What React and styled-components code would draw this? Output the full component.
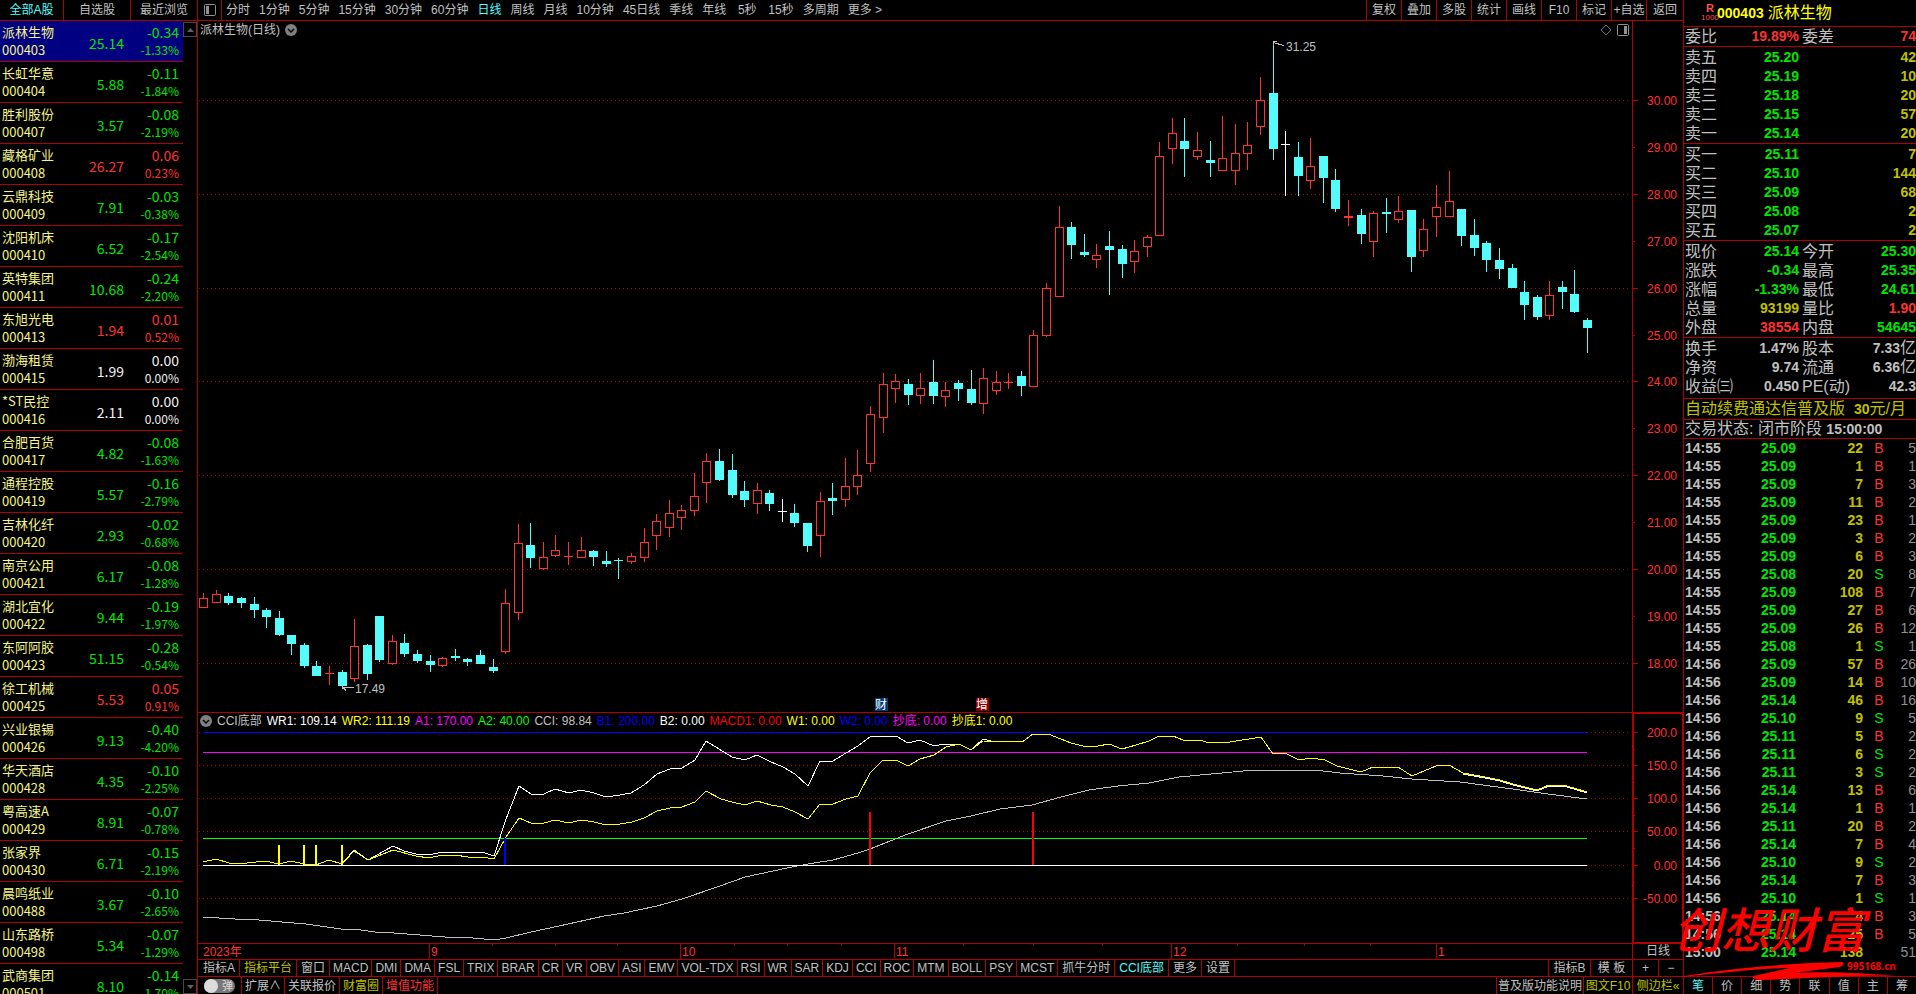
import React from 'react'
import styled, { createGlobalStyle } from 'styled-components'

const red = '#ff3232'
const green = '#00e600'
const line = '#b00000'
const cyan = '#54fcfc'
const grey = '#c0c0c0'
const olive = '#c0c000'

const GlobalStyle = createGlobalStyle`
* { box-sizing: border-box; }
body {
  margin: 0;
  background: #000;
  overflow: hidden;
}
button {
  margin: 0;
  padding: 0;
  border: 0;
  background: none;
  color: inherit;
  font: inherit;
  cursor: pointer;
}
`
const Page = styled.div`
display: flex;
height: 100vh;
overflow: hidden;
background: #000;
color: ${grey};
font-family: "Liberation Sans", "Noto Sans CJK SC", sans-serif;
font-size: 12px;
line-height: 16px;
white-space: nowrap;
`

/* stock list */
const StockPanel = styled.aside`
display: flex;
flex-direction: column;
width: 198px;
flex-shrink: 0;
border-right: 1px solid ${line};
`
const StockTabs = styled.nav`
display: grid;
grid-template-columns: 64px 67px 1fr;
height: 21px;
flex-shrink: 0;
border-bottom: 1px solid ${line};
`
const StockTab = styled.button`
border-right: ${p => p.$last ? 0 : 1}px solid ${line};
color: ${p => p.$active ? cyan : grey};
`
const StockBody = styled.div`
display: flex;
flex: 1;
min-height: 0;
`
const StockList = styled.ul`
flex: 1;
margin: 0;
padding: 0;
list-style: none;
overflow: hidden;
font-family: "Noto Sans CJK SC", sans-serif;
`
const StockRow = styled.li`
display: grid;
grid-template-columns: 1fr 55px 55px;
height: 41px;
padding: 2px 4px 0 2px;
border-bottom: 1px solid ${line};
background: ${p => p.$active ? '#000080' : '#000'};
color: ${p => p.$color};
`
const StockName = styled.div`
display: grid;
grid-template-rows: 18px 18px;
line-height: 18px;
font-size: 13px;
color: #f4f488;
`
const StockPrice = styled.div`
font-size: 14px;
line-height: 40px;
text-align: right;
`
const StockChange = styled.div`
display: grid;
grid-template-rows: 18px 18px;
line-height: 18px;
font-size: 14px;
text-align: right;
`
const Percent = styled.span`
font-size: 12px;
`
const ScrollTrack = styled.div`
display: flex;
flex-direction: column;
justify-content: space-between;
width: 14px;
padding-top: 1px;
`
const ScrollButton = styled.button`
display: grid;
place-items: center;
height: 15px;
border: 1px solid #484848;
`

/* centre */
const Centre = styled.main`
display: flex;
flex-direction: column;
flex: 1;
min-width: 0;
`
const Toolbar = styled.nav`
display: flex;
height: 21px;
flex-shrink: 0;
border-bottom: 1px solid ${line};
`
const LayoutButton = styled.button`
display: grid;
place-items: center;
width: 24px;
border-right: 1px solid ${line};
`
const Periods = styled.div`
display: flex;
flex: 1;
gap: 1px;
`
const Period = styled.button`
min-width: 32px;
padding: 0 4px;
color: ${p => p.$active ? cyan : grey};
`
const Tool = styled.button`
width: 35px;
border-left: 1px solid ${line};
&:last-child { width: 37px; }
`
const Pane = styled.section`
display: grid;
grid-template: 100% / 100%;
flex: ${p => p.$height ? `0 0 ${p.$height}px` : '1 1 0'};
min-height: 0;
border-bottom: 1px solid ${line};
`
const Chart = styled.svg`
grid-area: 1 / 1;
display: block;
width: 100%;
height: 100%;
font-family: "Liberation Sans", "Noto Sans CJK SC", sans-serif;
font-size: 12px;
`
const PaneHead = styled.header`
grid-area: 1 / 1;
align-self: start;
display: flex;
align-items: center;
gap: 5px;
height: ${p => p.$height}px;
padding: 0 54px 0 2px;
`
const Spacer = styled.span`
flex: 1;
`
const Reading = styled.span`
color: ${p => p.$color};
`
const TimeRow = styled.div`
display: flex;
height: 16px;
flex-shrink: 0;
border-bottom: 1px solid ${line};
`
const TimeChart = styled(Chart)`
flex: 1;
width: auto;
min-width: 0;
`
const TimeUnit = styled.div`
width: 51px;
border-left: 1px solid ${line};
line-height: 15px;
text-align: center;
`
const TabRow = styled.nav`
display: flex;
height: 17px;
flex-shrink: 0;
padding-left: ${p => p.$last ? 0 : 1}px;
border-bottom: ${p => p.$last ? 0 : 1}px solid ${line};
`
const Tab = styled.button`
padding: 0 ${p => p.$cjk ? 4 : 3}px;
border-right: 1px solid ${line};
color: ${p => p.$color || grey};
`
const EndTab = styled.button`
width: ${p => p.$width}px;
border-left: 1px solid ${line};
color: ${p => p.$color || grey};
`
const Toggle = styled.label`
display: flex;
align-items: center;
width: 44px;
padding-left: 6px;
border-right: 1px solid ${line};
input {
  position: absolute;
  opacity: 0;
}
`
const ToggleTrack = styled.span`
display: flex;
align-items: center;
gap: 4px;
width: 31px;
height: 14px;
border-radius: 7px;
background: #787878;
color: #ddd;
font-size: 11px;
line-height: 14px;
&::before {
  content: "";
  width: 14px;
  height: 14px;
  border-radius: 7px;
  background: #dcdcdc;
}
`

/* quote panel */
const QuotePanel = styled.aside`
position: relative;
display: flex;
flex-direction: column;
width: 233px;
flex-shrink: 0;
border-left: 1px solid ${line};
font-size: 16px;
`
const QuoteTitle = styled.header`
display: flex;
align-items: center;
gap: 4px;
height: 27px;
padding-left: 17px;
border-bottom: 1px solid ${line};
color: #ffff00;
`
const Margin = styled.span`
display: grid;
justify-items: center;
width: 16px;
font-size: 8px;
line-height: 9px;
color: #ff5050;
b { font-size: 11px; }
`
const Code = styled.b`
margin-left: -4px;
font-size: 14px;
`
const QuoteTable = styled.table`
width: 100%;
table-layout: fixed;
border-spacing: 0;
border-bottom: 1px solid ${line};
padding: ${p => p.$pad};
`
const QuoteLabel = styled.th`
height: 19px;
padding: 0 0 0 ${p => p.$second ? 3 : 1}px;
width: ${p => p.$second ? 49 : 50}px;
font-weight: 400;
line-height: 19px;
text-align: left;
`
const QuoteValue = styled.td`
padding: 0;
width: ${p => p.$first ? '65px' : 'auto'};
color: ${p => p.$color};
font-size: 14px;
font-weight: 700;
line-height: 19px;
text-align: right;
span {
  font-size: 16px;
  font-weight: 400;
  line-height: 0;
}
`
const Notice = styled.div`
height: ${p => p.$height}px;
padding-left: 1px;
border-bottom: 1px solid ${line};
line-height: ${p => p.$height - 1}px;
color: ${p => p.$color};
white-space: pre;
b { font-size: 14px; }
`
const TradeArea = styled.div`
flex: 1;
min-height: 0;
overflow: hidden;
`
const Trades = styled.table`
width: 100%;
table-layout: fixed;
border-spacing: 0;
font-size: 14px;
font-weight: 700;
line-height: 18px;
`
const Trade = styled.td`
width: ${p => p.$width ? `${p.$width}px` : 'auto'};
height: 18px;
padding: 0 0 0 ${p => p.$left ? 1 : 0}px;
color: ${p => p.$color};
font-weight: ${p => p.$light ? 400 : 700};
text-align: ${p => p.$left ? 'left' : p.$mid ? 'center' : 'right'};
`
const QuoteTabs = styled.nav`
display: grid;
grid-template-columns: 28px repeat(7, 1fr);
height: 18px;
border-top: 1px solid ${line};
font-size: 12px;
`
const QuoteTab = styled.button`
border-left: ${p => p.$active ? 0 : 1}px solid ${line};
color: ${p => p.$active ? cyan : grey};
`
const Brand = styled.svg`
position: absolute;
right: 0;
bottom: 0;
width: 248px;
height: 100px;
pointer-events: none;
`

const stocks = [
    ['派林生物', '000403', '25.14', '-0.34', '-1.33%'],
    ['长虹华意', '000404', '5.88', '-0.11', '-1.84%'],
    ['胜利股份', '000407', '3.57', '-0.08', '-2.19%'],
    ['藏格矿业', '000408', '26.27', '0.06', '0.23%'],
    ['云鼎科技', '000409', '7.91', '-0.03', '-0.38%'],
    ['沈阳机床', '000410', '6.52', '-0.17', '-2.54%'],
    ['英特集团', '000411', '10.68', '-0.24', '-2.20%'],
    ['东旭光电', '000413', '1.94', '0.01', '0.52%'],
    ['渤海租赁', '000415', '1.99', '0.00', '0.00%'],
    ['*ST民控', '000416', '2.11', '0.00', '0.00%'],
    ['合肥百货', '000417', '4.82', '-0.08', '-1.63%'],
    ['通程控股', '000419', '5.57', '-0.16', '-2.79%'],
    ['吉林化纤', '000420', '2.93', '-0.02', '-0.68%'],
    ['南京公用', '000421', '6.17', '-0.08', '-1.28%'],
    ['湖北宜化', '000422', '9.44', '-0.19', '-1.97%'],
    ['东阿阿胶', '000423', '51.15', '-0.28', '-0.54%'],
    ['徐工机械', '000425', '5.53', '0.05', '0.91%'],
    ['兴业银锡', '000426', '9.13', '-0.40', '-4.20%'],
    ['华天酒店', '000428', '4.35', '-0.10', '-2.25%'],
    ['粤高速A', '000429', '8.91', '-0.07', '-0.78%'],
    ['张家界', '000430', '6.71', '-0.15', '-2.19%'],
    ['晨鸣纸业', '000488', '3.67', '-0.10', '-2.65%'],
    ['山东路桥', '000498', '5.34', '-0.07', '-1.29%'],
    ['武商集团', '000501', '8.10', '-0.14', '-1.70%'],
]

const periods = ['分时', '1分钟', '5分钟', '15分钟', '30分钟', '60分钟', '日线', '周线', '月线', '10分钟', '45日线', '季线', '年线', '5秒', '15秒', '多周期', '更多 >']
const tools = ['复权', '叠加', '多股', '统计', '画线', 'F10', '标记', '+自选', '返回']

// high, body top, body bottom, low, kind (r up, c down, w flat)
const candles = [
    [593, 598, 608, 608, 'r'], [590, 594, 603, 603, 'r'], [593, 596, 603, 605, 'c'], [597, 598, 603, 608, 'c'],
    [597, 604, 610, 618, 'c'], [608, 610, 617, 628, 'c'], [611, 618, 635, 636, 'c'], [635, 635, 644, 655, 'c'],
    [643, 645, 666, 668, 'c'], [661, 666, 676, 676, 'c'], [666, 673, 674, 685, 'r'], [670, 672, 686, 686, 'c'],
    [619, 646, 679, 682, 'r'], [644, 645, 674, 680, 'c'], [616, 616, 660, 662, 'c'], [635, 641, 664, 665, 'r'],
    [634, 643, 654, 657, 'c'], [650, 654, 661, 663, 'c'], [655, 661, 665, 672, 'c'], [657, 658, 666, 667, 'r'],
    [649, 656, 658, 661, 'c'], [658, 659, 662, 666, 'c'], [650, 655, 664, 664, 'c'], [659, 667, 671, 673, 'c'],
    [589, 603, 652, 654, 'r'], [524, 543, 613, 620, 'r'], [523, 545, 558, 568, 'c'], [542, 557, 569, 570, 'r'],
    [535, 550, 556, 557, 'r'], [542, 556, 557, 565, 'r'], [537, 550, 558, 558, 'r'], [550, 551, 557, 566, 'c'],
    [551, 561, 564, 567, 'c'], [558, 560, 561, 579, 'c'], [553, 556, 562, 564, 'r'], [528, 542, 558, 562, 'r'],
    [514, 521, 536, 550, 'r'], [500, 513, 528, 537, 'r'], [505, 510, 518, 530, 'r'], [473, 496, 511, 516, 'r'],
    [453, 461, 483, 503, 'r'], [449, 461, 480, 481, 'c'], [454, 470, 495, 498, 'c'], [481, 491, 500, 507, 'c'],
    [483, 490, 504, 514, 'r'], [490, 493, 504, 511, 'c'], [499, 511, 512, 522, 'w'], [504, 513, 523, 527, 'c'],
    [523, 523, 546, 552, 'c'], [492, 501, 536, 557, 'r'], [483, 498, 501, 515, 'c'], [458, 486, 500, 507, 'r'],
    [450, 475, 487, 495, 'r'], [406, 414, 464, 472, 'r'], [373, 384, 418, 433, 'r'], [374, 381, 389, 403, 'r'],
    [379, 384, 395, 405, 'c'], [373, 388, 396, 404, 'r'], [360, 382, 396, 404, 'c'], [382, 390, 397, 407, 'r'],
    [380, 383, 389, 401, 'c'], [370, 389, 403, 405, 'c'], [368, 378, 404, 414, 'r'], [371, 382, 391, 395, 'r'],
    [373, 382, 383, 389, 'r'], [371, 376, 386, 396, 'c'], [330, 335, 387, 387, 'r'], [283, 288, 336, 337, 'r'],
    [206, 227, 297, 297, 'r'], [222, 227, 245, 259, 'c'], [234, 252, 255, 257, 'c'], [244, 255, 260, 268, 'r'],
    [231, 246, 250, 295, 'c'], [245, 249, 264, 278, 'c'], [240, 251, 262, 273, 'r'], [235, 237, 247, 257, 'r'],
    [142, 156, 236, 236, 'r'], [118, 133, 149, 164, 'r'], [118, 141, 149, 177, 'c'], [132, 150, 157, 160, 'r'],
    [141, 160, 163, 177, 'c'], [116, 158, 171, 171, 'r'], [124, 153, 171, 185, 'r'], [122, 145, 154, 170, 'r'],
    [77, 100, 127, 135, 'r'], [41, 93, 149, 160, 'c'], [131, 144, 145, 196, 'w'], [142, 157, 176, 196, 'c'],
    [138, 166, 181, 189, 'r'], [156, 156, 178, 203, 'c'], [169, 180, 209, 212, 'c'], [200, 216, 218, 226, 'r'],
    [209, 215, 234, 244, 'c'], [211, 213, 242, 257, 'r'], [198, 212, 214, 233, 'c'], [196, 211, 220, 223, 'r'],
    [210, 210, 257, 272, 'c'], [219, 229, 251, 257, 'r'], [185, 207, 217, 237, 'r'], [171, 201, 217, 217, 'r'],
    [209, 209, 236, 246, 'c'], [219, 235, 248, 256, 'c'], [241, 243, 260, 272, 'c'], [248, 260, 269, 279, 'c'],
    [264, 268, 288, 288, 'c'], [281, 292, 305, 320, 'c'], [295, 297, 317, 320, 'c'], [281, 295, 316, 320, 'r'],
    [281, 287, 292, 309, 'c'], [270, 294, 312, 313, 'c'], [318, 320, 328, 353, 'c'],
]
const candleX = (i) => 203 + Math.round(i * 12.58 + 0.2)

const priceScale = [
    ['30.00', 100], ['29.00', 147], ['28.00', 194], ['27.00', 241], ['26.00', 288], ['25.00', 335], ['24.00', 381],
    ['23.00', 428], ['22.00', 475], ['21.00', 522], ['20.00', 569], ['19.00', 616], ['18.00', 663],
]
const cciScale = [['200.0', 732], ['150.0', 765], ['100.0', 798], ['50.00', 831], ['0.00', 865], ['-50.00', 898]]

const readings = [
    ['CCI底部', grey], ['WR1: 109.14', '#fff'], ['WR2: 111.19', '#ff0'], ['A1: 170.00', '#f0f'], ['A2: 40.00', '#0f0'],
    ['CCI: 98.84', grey], ['B1: 200.00', '#00f'], ['B2: 0.00', '#fff'], ['MACD1: 0.00', '#f00'], ['W1: 0.00', '#ff0'],
    ['W2: 0.00', '#00f'], ['抄底: 0.00', '#f0f'], ['抄底1: 0.00', '#ff0'],
]

const wr1 = '342,864 354,850 368,860 393,846 404,851 416,854 429,855 442,852 455,852 468,853 482,852 494,856 506,819 519,786 531,794 544,794 555,789 569,793 581,790 594,793 606,797 620,795 631,793 644,785 657,774 670,769 682,768 695,760 706,741 732,757 745,760 757,755 771,762 783,767 795,774 808,786 820,761 833,761 846,753 858,746 870,737 896,736 908,743 920,740 934,746 945,744 959,744 971,750 983,739 991,741'
const wr1Tail = '1463,774 1485,778 1500,781 1513,785 1537,791 1549,786 1563,786 1574,789 1587,793'
const wr2 = '203,862 216,859 229,863 247,863 265,861 279,864 291,861 304,864 316,865 329,860 342,864 354,851 368,860 393,850 416,856 429,858 442,855 455,855 468,857 482,857 494,859 506,837 519,818 531,823 544,823 555,820 569,823 581,820 594,822 606,825 620,824 632,822 644,818 657,811 670,808 682,807 695,802 706,791 721,799 732,802 745,805 757,801 771,805 783,807 795,812 808,819 820,804 833,804 846,799 858,796 870,773 882,761 896,760 908,766 920,759 934,755 946,747 959,744 971,750 983,741 1022,742 1033,734 1048,734 1061,739 1071,743 1083,746 1098,746 1109,744 1122,749 1136,745 1149,741 1159,736 1173,736 1183,740 1199,740 1210,743 1230,742 1261,737 1273,754 1285,753 1299,760 1311,758 1325,760 1337,766 1361,772 1373,767 1387,768 1398,767 1412,776 1436,766 1449,765 1463,773 1485,777 1500,780 1513,784 1537,790 1549,785 1563,785 1574,788 1587,792'
const cci = '203,917 235,919 259,920 282,922 306,924 341,929 354,929 375,932 394,933 445,937 473,938 494,940 506,938 531,932 559,926 604,916 624,913 657,906 682,899 720,886 745,877 787,868 808,864 833,860 858,853 870,849 885,843 908,834 946,821 971,816 1000,809 1032,805 1061,797 1089,790 1118,786 1149,783 1179,777 1254,770 1315,770 1340,773 1383,776 1412,779 1460,782 1513,789 1548,794 1587,799'

const months = [['2023年', 201], ['9', 429], ['10', 680], ['11', 894], ['12', 1171], ['1', 1436]]
const weekTicks = [492, 555, 617, 734, 787, 841, 963, 1033, 1102, 1237, 1304, 1370]

const indicators = ['指标A', '指标平台', '窗口', 'MACD', 'DMI', 'DMA', 'FSL', 'TRIX', 'BRAR', 'CR', 'VR', 'OBV', 'ASI', 'EMV', 'VOL-TDX', 'RSI', 'WR', 'SAR', 'KDJ', 'CCI', 'ROC', 'MTM', 'BOLL', 'PSY', 'MCST', '抓牛分时', 'CCI底部', '更多', '设置']
const indicatorColors = { '指标平台': olive, 'CCI底部': cyan }

const ratio = [['委比', '19.89%', red, '委差', '74', red]]
const asks = [['卖五', '25.20', '42'], ['卖四', '25.19', '10'], ['卖三', '25.18', '20'], ['卖二', '25.15', '57'], ['卖一', '25.14', '20']]
    .map(([label, price, vol]) => [label, price, green, '', vol, olive])
const bids = [['买一', '25.11', '7'], ['买二', '25.10', '144'], ['买三', '25.09', '68'], ['买四', '25.08', '2'], ['买五', '25.07', '2']]
    .map(([label, price, vol]) => [label, price, green, '', vol, olive])
const today = [
    ['现价', '25.14', green, '今开', '25.30', green],
    ['涨跌', '-0.34', green, '最高', '25.35', green],
    ['涨幅', '-1.33%', green, '最低', '24.61', green],
    ['总量', '93199', olive, '量比', '1.90', red],
    ['外盘', '38554', red, '内盘', '54645', green],
]
const finance = [
    ['换手', '1.47%', grey, '股本', <>7.33<span>亿</span></>, grey],
    ['净资', '9.74', grey, '流通', <>6.36<span>亿</span></>, grey],
    ['收益㈢', '0.450', grey, 'PE(动)', '42.3', grey],
]

const trades = [
    ['14:55', '25.09', 22, 'B', 5], ['14:55', '25.09', 1, 'B', 1], ['14:55', '25.09', 7, 'B', 3],
    ['14:55', '25.09', 11, 'B', 2], ['14:55', '25.09', 23, 'B', 1], ['14:55', '25.09', 3, 'B', 2],
    ['14:55', '25.09', 6, 'B', 3], ['14:55', '25.08', 20, 'S', 8], ['14:55', '25.09', 108, 'B', 7],
    ['14:55', '25.09', 27, 'B', 6], ['14:55', '25.09', 26, 'B', 12], ['14:55', '25.08', 1, 'S', 1],
    ['14:56', '25.09', 57, 'B', 26], ['14:56', '25.09', 14, 'B', 10], ['14:56', '25.14', 46, 'B', 16],
    ['14:56', '25.10', 9, 'S', 5], ['14:56', '25.11', 5, 'B', 2], ['14:56', '25.11', 6, 'S', 2],
    ['14:56', '25.11', 3, 'S', 2], ['14:56', '25.14', 13, 'B', 6], ['14:56', '25.14', 1, 'B', 1],
    ['14:56', '25.11', 20, 'B', 2], ['14:56', '25.14', 7, 'B', 4], ['14:56', '25.10', 9, 'S', 2],
    ['14:56', '25.14', 7, 'B', 3], ['14:56', '25.10', 1, 'S', 1], ['14:56', '25.14', 4, 'B', 3],
    ['14:56', '25.14', 25, 'B', 5], ['15:00', '25.14', 138, '', 51],
]

const changeColor = (change) => {
    if (change === '0.00') return '#f0f0f0'
    return change.startsWith('-') ? green : red
}

const FoldIcon = () => (
    <svg width="12" height="12" viewBox="0 0 12 12" aria-hidden="true">
        <circle cx="6" cy="6" r="6" fill="#808080" />
        <path d="M3 5l3 3 3-3" fill="none" stroke="#000" strokeWidth="1.5" />
    </svg>
)

const PanelIcon = ({ right }) => (
    <svg width="12" height="12" viewBox="0 0 12 12" aria-hidden="true">
        <rect x="0.5" y="0.5" width="11" height="11" rx="1" fill="none" stroke="#909090" />
        <rect x={right ? 7 : 2} y="2" width="3" height="8" fill="#909090" />
    </svg>
)

const Candle = ({ x, data }) => {
    const [high, top, bottom, low, kind] = data
    const color = { r: red, c: cyan, w: '#fff' }[kind]
    const hollow = kind === 'r' && bottom - top > 2
    return (
        <g fill={color}>
            <rect x={x} y={high} width="1" height={top - high} />
            <rect x={x} y={bottom} width="1" height={low - bottom} />
            {hollow
                ? <rect x={x - 3.5} y={top + 0.5} width="8" height={bottom - top - 1} fill="#000" stroke={color} />
                : <rect x={x - 4} y={top} width="9" height={bottom - top} />}
        </g>
    )
}

const Scale = ({ items, everyOther }) => items.map(([label, y], i) => {
    const minor = everyOther && i % 2 === 1
    return (
        <g key={label}>
            {!minor && <line x1="199" x2="1628" y1={y + 0.5} y2={y + 0.5} stroke={line} strokeDasharray="1 3" />}
            <line x1="1633" x2={minor ? 1635 : 1638} y1={y + 0.5} y2={y + 0.5} stroke={line} />
            <text x="1677" y={y + 5} textAnchor="end" fill={red}>{label}</text>
        </g>
    )
})

const PriceChart = () => (
    <Chart viewBox="198 21 1485 691" preserveAspectRatio="none" shapeRendering="crispEdges">
        <Scale items={priceScale} everyOther />
        <line x1="1632.5" x2="1632.5" y1="21" y2="712" stroke={line} />
        {candles.map((data, i) => <Candle key={i} x={candleX(i)} data={data} />)}
        <g fill="none" stroke={grey}>
            <path d="M1284 45.5L1273 42.5M1277 41.5h-4v4" />
            <path d="M354 687.5h-11M343 687.5l3 3M342.5 686v3" />
        </g>
        <text x="1286" y="51" fill={grey}>31.25</text>
        <text x="355" y="693" fill={grey}>17.49</text>
        <rect x="875" y="698" width="13" height="13" fill="#003c78" />
        <text x="875" y="709" fill="#fff">财</text>
        <rect x="976" y="698" width="13" height="13" fill="#8c0000" />
        <text x="976" y="709" fill="#fff">增</text>
    </Chart>
)

const CciChart = () => (
    <Chart viewBox="198 713 1485 230" preserveAspectRatio="none" shapeRendering="crispEdges">
        <Scale items={cciScale} />
        {[749, 782, 815, 848, 882].map(y => <rect key={y} x="1634" y={y} width="1" height="1" fill={line} />)}
        <line x1="1632.5" x2="1632.5" y1="713" y2="943" stroke={line} />
        <rect x="1633.5" y="713.5" width="49" height="229" fill="none" stroke={line} />
        <rect x="203" y="732" width="1384" height="1" fill="#00f" />
        <rect x="203" y="752" width="1384" height="1" fill="#f0f" />
        <rect x="203" y="838" width="1384" height="1" fill="#0f0" />
        <g fill="none" strokeWidth="1">
            <polyline points={cci} stroke={grey} />
            <polyline points={wr1} stroke="#fff" />
            <polyline points={wr1Tail} stroke="#fff" />
            <polyline points={wr2} stroke="#ff0" />
        </g>
        {[6, 8, 9, 11].map(i => <rect key={i} x={candleX(i) - 1} y="845" width="2" height="20" fill="#ff0" />)}
        <rect x="504" y="838" width="2" height="28" fill="#00f" />
        {[53, 66].map(i => <rect key={i} x={candleX(i) - 1} y="812" width="2" height="53" fill="#f00" />)}
        <rect x="203" y="865" width="1384" height="1" fill="#fff" />
    </Chart>
)

const QuoteRows = ({ rows, pad }) => (
    <QuoteTable $pad={pad}>
        <tbody>
            {rows.map(([label, value, color, label2, value2, color2]) => (
                <tr key={label}>
                    <QuoteLabel scope="row">{label}</QuoteLabel>
                    <QuoteValue $first $color={color}>{value}</QuoteValue>
                    <QuoteLabel as={label2 ? 'th' : 'td'} $second>{label2}</QuoteLabel>
                    <QuoteValue $color={color2}>{value2}</QuoteValue>
                </tr>
            ))}
        </tbody>
    </QuoteTable>
)

const App = () => {
    return (
        <Page>
            <GlobalStyle />
            <StockPanel>
                <StockTabs>
                    <StockTab $active>全部A股</StockTab>
                    <StockTab>自选股</StockTab>
                    <StockTab $last>最近浏览</StockTab>
                </StockTabs>
                <StockBody>
                    <StockList>
                        {stocks.map(([name, code, price, change, percent], i) => (
                            <StockRow key={code} $active={i === 0} $color={changeColor(change)}>
                                <StockName><span>{name}</span><span>{code}</span></StockName>
                                <StockPrice>{price}</StockPrice>
                                <StockChange><span>{change}</span><Percent>{percent}</Percent></StockChange>
                            </StockRow>
                        ))}
                    </StockList>
                    <ScrollTrack>
                        <ScrollButton aria-label="up">
                            <svg width="7" height="4"><path d="M0 4L3.5 0 7 4z" fill="#606060" /></svg>
                        </ScrollButton>
                        <ScrollButton aria-label="down">
                            <svg width="7" height="4"><path d="M0 0L3.5 4 7 0z" fill="#606060" /></svg>
                        </ScrollButton>
                    </ScrollTrack>
                </StockBody>
            </StockPanel>

            <Centre>
                <Toolbar>
                    <LayoutButton aria-label="layout"><PanelIcon /></LayoutButton>
                    <Periods>
                        {periods.map(label => <Period key={label} $active={label === '日线'}>{label}</Period>)}
                    </Periods>
                    {tools.map(label => <Tool key={label}>{label}</Tool>)}
                </Toolbar>
                <Pane>
                    <PriceChart />
                    <PaneHead $height={18}>
                        <span>派林生物(日线)</span>
                        <FoldIcon />
                        <Spacer />
                        <svg width="12" height="12" viewBox="0 0 12 12" aria-hidden="true">
                            <path d="M6 1l5 5-5 5-5-5z" fill="none" stroke="#707070" />
                        </svg>
                        <PanelIcon right />
                    </PaneHead>
                </Pane>
                <Pane $height={231}>
                    <CciChart />
                    <PaneHead $height={16}>
                        <FoldIcon />
                        {readings.map(([label, color]) => <Reading key={label} $color={color}>{label}</Reading>)}
                    </PaneHead>
                </Pane>
                <TimeRow>
                    <TimeChart viewBox="198 944 1434 15" preserveAspectRatio="none" shapeRendering="crispEdges">
                        {months.map(([label, x], i) => (
                            <g key={label}>
                                {i > 0 && <rect x={x} y="944" width="1" height="15" fill={line} />}
                                <text x={x + 2} y="956" fill={red}>{label}</text>
                            </g>
                        ))}
                        {weekTicks.map(x => <rect key={x} x={x} y="944" width="1" height="2" fill={line} />)}
                    </TimeChart>
                    <TimeUnit>日线</TimeUnit>
                </TimeRow>
                <TabRow>
                    {indicators.map(label => (
                        <Tab key={label} $cjk={/[^\x00-\x7f]/.test(label)} $color={indicatorColors[label]}>{label}</Tab>
                    ))}
                    <Spacer />
                    <EndTab $width={42}>指标B</EndTab>
                    <EndTab $width={42}>模 板</EndTab>
                    <EndTab $width={26}>+</EndTab>
                    <EndTab $width={25}>−</EndTab>
                </TabRow>
                <TabRow $last>
                    <Toggle>
                        <input type="checkbox" aria-label="弹" />
                        <ToggleTrack>弹</ToggleTrack>
                    </Toggle>
                    <Tab>扩展∧</Tab>
                    <Tab>关联报价</Tab>
                    <Tab $color={olive}>财富圈</Tab>
                    <Tab $color={red}>增值功能</Tab>
                    <Spacer />
                    <EndTab $width={87}>普及版功能说明</EndTab>
                    <EndTab $width={49} $color={olive}>图文F10</EndTab>
                    <EndTab $width={51} $color={olive}>侧边栏«</EndTab>
                </TabRow>
            </Centre>

            <QuotePanel>
                <QuoteTitle>
                    <Margin><b>R</b>1000</Margin>
                    <Code>000403</Code>
                    <span>派林生物</span>
                </QuoteTitle>
                <QuoteRows rows={ratio} pad="0" />
                <QuoteRows rows={asks} pad="1px 0 0" />
                <QuoteRows rows={bids} pad="1px 0 0" />
                <QuoteRows rows={today} pad="1px 0 0" />
                <QuoteRows rows={finance} pad="1px 0 2px" />
                <Notice $height={21} $color={olive}>自动续费通达信普及版  <b>30</b>元/月</Notice>
                <Notice $height={19} $color={grey}>交易状态: 闭市阶段 <b>15:00:00</b></Notice>
                <TradeArea>
                    <Trades>
                        <tbody>
                            {trades.map(([time, price, volume, side, count], i) => (
                                <tr key={i}>
                                    <Trade $left $width={50} $color={grey}>{time}</Trade>
                                    <Trade $width={62} $color={green}>{price}</Trade>
                                    <Trade $width={67} $color={olive}>{volume}</Trade>
                                    <Trade $mid $light $width={32} $color={side === 'S' ? green : red}>{side}</Trade>
                                    <Trade $light $color="#909090">{count}</Trade>
                                </tr>
                            ))}
                        </tbody>
                    </Trades>
                </TradeArea>
                <QuoteTabs>
                    {['笔', '价', '细', '势', '联', '值', '主', '筹'].map((label, i) => (
                        <QuoteTab key={label} $active={i === 0}>{label}</QuoteTab>
                    ))}
                </QuoteTabs>
                <Brand viewBox="-8 0 248 100" fill="#ff0000">
                    <text x="-3" y="54" fontSize="48" fontWeight="500" fontStyle="italic" fontFamily="Noto Sans CJK SC, sans-serif">创想财富</text>
                    <path d="M2 83C30 78 100 69 166 68q4 2-2 5L118 79C150 77 190 79 221 82C180 81 140 84 84 86q-8 0-7-4L114 74C80 74 50 79 2 83z" />
                    <text x="171" y="76" fontSize="10" fontWeight="700" fontFamily="Noto Sans, sans-serif">995168.cn</text>
                </Brand>
            </QuotePanel>
        </Page>
    )
}

export default App
